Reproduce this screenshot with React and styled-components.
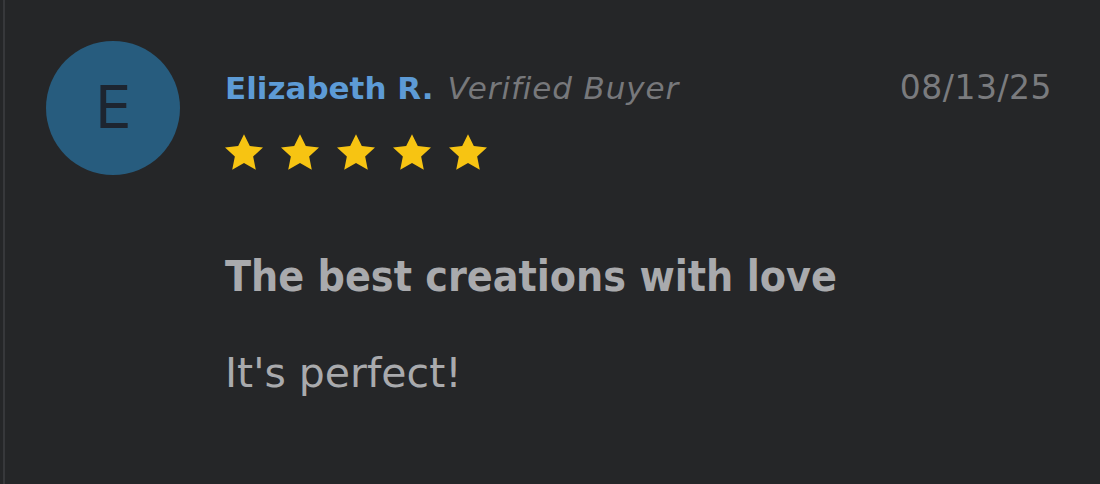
import React from 'react'
import styled, { createGlobalStyle } from 'styled-components'

const GlobalStyle = createGlobalStyle`
    html, body {
        margin: 0;
        background: #252628;
    }
`

const review = {
    initial: 'E',
    name: 'Elizabeth R.',
    badge: 'Verified Buyer',
    date: '08/13/25',
    rating: 5,
    title: 'The best creations with love',
    body: "It's perfect!",
}

const Star = () => (
    <svg width="38" height="36" viewBox="1.2 1.2 21.6 20.2">
        <path
            d="M12 1.2l3.3 6.7 7.5.9-5.6 5 1.5 7.6L12 17.6l-6.7 3.8 1.5-7.6-5.6-5 7.5-.9z"
            fill="#f7c412"
        />
    </svg>
)

const App = () => {
    return (
        <>
            <GlobalStyle />
            <Page>
                <Review>
                    <Avatar>{review.initial}</Avatar>
                    <Content>
                        <Header>
                            <Author>
                                <Name>{review.name}</Name>
                                <Badge>{review.badge}</Badge>
                            </Author>
                            <DateLabel>{review.date}</DateLabel>
                        </Header>
                        <Stars>
                            {Array.from({ length: review.rating }).map((_, i) => (
                                <Star key={i} />
                            ))}
                        </Stars>
                        <Title>{review.title}</Title>
                        <Body>{review.body}</Body>
                    </Content>
                </Review>
            </Page>
        </>
    )
}

export default App

const Page = styled.div`
    height: 484px;
    box-sizing: border-box;
    margin-left: 3px;
    border-left: 2px solid #37383b;
    font-family: "DejaVu Sans", sans-serif;
`

const Review = styled.div`
    display: flex;
    gap: 45px;
    padding: 41px 48px 0 41px;
`

const Avatar = styled.div`
    flex: none;
    width: 134px;
    height: 134px;
    border-radius: 50%;
    background: #275c7e;
    color: #1d2530;
    display: flex;
    align-items: center;
    justify-content: center;
    font-size: 58px;
    line-height: 1;
`

const Content = styled.div`
    flex: 1;
    display: flex;
    flex-direction: column;
`

const Header = styled.div`
    display: flex;
    justify-content: space-between;
    align-items: baseline;
    margin-top: 30px;
`

const Author = styled.div`
    display: flex;
    align-items: baseline;
    gap: 14px;
`

const Name = styled.span`
    color: #5d9bd6;
    font-weight: 700;
    font-size: 31px;
    line-height: 1;
`

const Badge = styled.span`
    color: #77787b;
    font-style: italic;
    font-size: 31px;
    letter-spacing: 0.9px;
    line-height: 1;
`

const DateLabel = styled.span`
    color: #7a7b7e;
    font-size: 33px;
    letter-spacing: 0.5px;
    line-height: 1;
`

const Stars = styled.div`
    display: flex;
    gap: 18px;
    margin-top: 30px;
`

const Title = styled.div`
    margin-top: 86px;
    color: #a9aaad;
    font-family: "DejaVu Sans Condensed", "DejaVu Sans", sans-serif;
    font-weight: 700;
    font-size: 42.5px;
    line-height: 1;
`

const Body = styled.div`
    margin-top: 54px;
    color: #a9aaad;
    font-size: 41px;
    line-height: 1;
`
